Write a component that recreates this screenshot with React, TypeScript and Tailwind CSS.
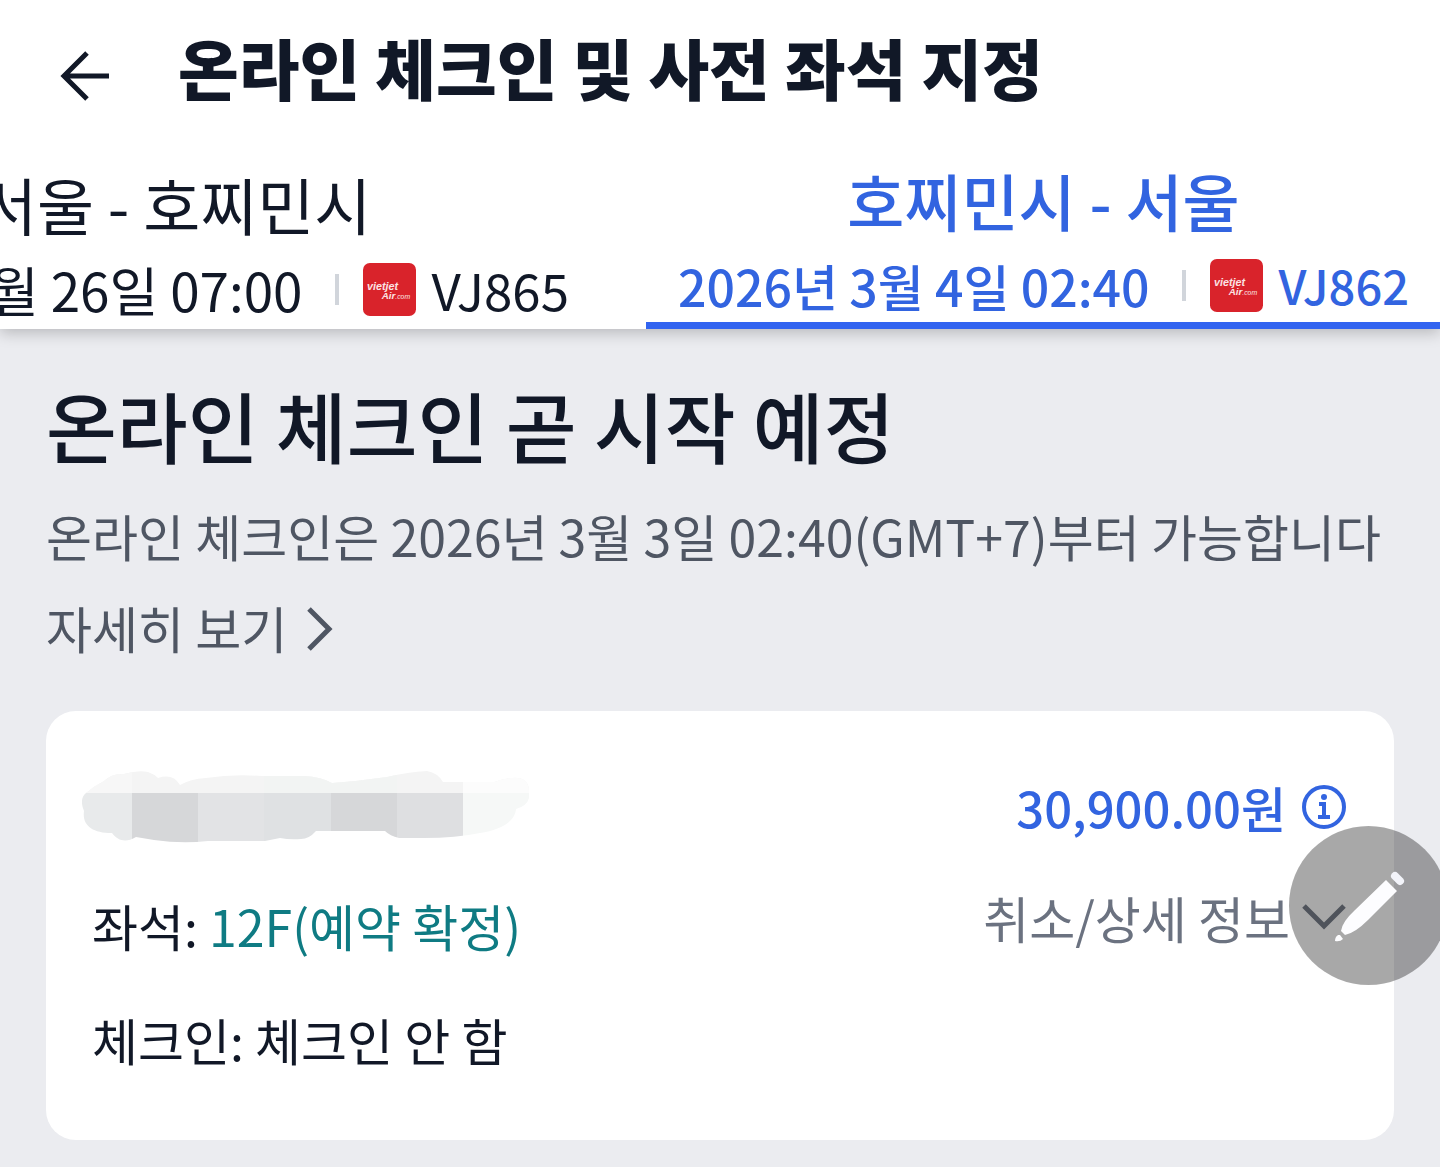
import type { ReactNode } from 'react';

function AirlineLogo() {
  return (
    <svg viewBox="0 0 54 54" className="h-[53px] w-[53px] shrink-0" role="img" aria-label="vietjet Air.com">
      <rect width="54" height="54" rx="7" fill="#d9232b" />
      <g fill="#fbe3e4" fontFamily="Liberation Sans, sans-serif" fontStyle="italic" fontWeight="700">
        <text x="4" y="28" fontSize="11">
          vietjet
        </text>
        <text x="19" y="37" fontSize="10">
          Air
          <tspan fontSize="7" fontWeight="400">
            .com
          </tspan>
        </text>
      </g>
    </svg>
  );
}

type FlightTabProps = {
  route: string;
  time: string;
  flight: string;
  active?: boolean;
};

function FlightTab({ route, time, flight, active = false }: FlightTabProps) {
  return (
    <button
      type="button"
      role="tab"
      aria-selected={active}
      className={
        active
          ? 'flex shrink-0 flex-col items-center border-b-[7px] border-[#3264f0] pt-1 pr-[31px] pl-8 font-medium text-[#3264e0]'
          : 'mr-[45px] flex shrink-0 flex-col items-center px-8 text-[#111827]'
      }
    >
      <span className={active ? 'text-[62px] leading-[96px]' : 'text-[62px] leading-[90px]'}>{route}</span>
      <span className={active ? 'flex items-center text-[50px] leading-[74px]' : 'flex items-center text-[53px] leading-[80px]'}>
        {time}
        <span className="mr-6 ml-8 h-[31px] w-1 bg-[#d1d5db]" />
        <AirlineLogo />
        <span className={active ? 'ml-4 text-[47px]' : 'ml-4 text-[51px]'}>{flight}</span>
      </span>
    </button>
  );
}

function RedactedName() {
  return (
    <svg viewBox="0 0 448 72" className="-ml-[10px] h-[72px] w-[448px]" role="img" aria-label="승객 이름">
      <defs>
        <clipPath id="brush">
          <path d="M4 22Q12 15 22 10Q30 2 42 3Q56 -1 66 1Q72 3 76 7Q91 2 98 14Q108 8 124 7Q150 3 180 5H222Q240 6 250 12Q277 10 305 6Q326 1 345 0Q356 2 361 11H412C430 5 447 3 447 20V27Q445 35 434 38C433 51 418 59 398 62Q374 67 342 67H317Q308 65 303 60H234Q227 68 219 68Q208 69 198 67L183 70H126Q100 73 72 69L54 66C44 72 36 70 30 62C10 62 0 54 2 40Q-3 28 4 22Z" />
        </clipPath>
      </defs>
      <g clipPath="url(#brush)">
        <rect width="448" height="22" fill="#f4f4f4" />
        <rect width="50" height="22" fill="#f7f7f7" />
        <rect x="182" width="133" height="22" fill="#f2f4f3" />
        <rect x="381" width="67" height="22" fill="#fcfcfc" />
        <rect y="22" width="50" height="50" fill="#e8eaeb" />
        <rect x="50" y="22" width="66" height="50" fill="#d6d7d9" />
        <rect x="116" y="22" width="66" height="50" fill="#e2e3e5" />
        <rect x="182" y="22" width="67" height="50" fill="#dfe1e3" />
        <rect x="249" y="22" width="66" height="50" fill="#d6d7d9" />
        <rect x="315" y="22" width="66" height="50" fill="#dedfe1" />
        <rect x="381" y="22" width="67" height="50" fill="#f6f8f7" />
      </g>
    </svg>
  );
}

function Row({ children }: { children: ReactNode }) {
  return <div className="flex items-start justify-between">{children}</div>;
}

export default function App() {
  return (
    <div className="relative min-h-screen overflow-hidden bg-[#ebecf0] pb-7 font-['Noto_Sans_CJK_KR',sans-serif] whitespace-nowrap text-[#111827]">
      <div className="bg-white shadow-[0_4px_14px_rgba(0,0,0,0.22)]">
        <header className="flex h-[148px] items-center pl-[60px]">
          <button type="button" aria-label="뒤로" className="mt-1">
            <svg viewBox="0 0 50 50" className="h-[50px] w-[50px]" fill="none" stroke="#111827" strokeWidth="5">
              <path d="M49 25H4M27 2L4 25L27 48" />
            </svg>
          </button>
          <h1 className="mb-4 ml-[68px] text-[66px] leading-[96px] font-black">온라인 체크인 및 사전 좌석 지정</h1>
        </header>
        <div role="tablist" className="flex items-end justify-end overflow-hidden">
          <FlightTab route="서울 - 호찌민시" time="2026년 2월 26일 07:00" flight="VJ865" />
          <FlightTab route="호찌민시 - 서울" time="2026년 3월 4일 02:40" flight="VJ862" active />
        </div>
      </div>

      <main className="px-[46px] pt-10">
        <h2 className="text-[77px] leading-[112px] font-medium">온라인 체크인 곧 시작 예정</h2>
        <p className="mt-2 text-[50px] leading-[92px] text-[#4f5663]">
          온라인 체크인은 2026년 3월 3일 02:40(GMT+7)부터 가능합니다
        </p>
        <a href="#details" className="flex w-fit items-center gap-5 text-[50px] leading-[92px] text-[#4f5663]">
          자세히 보기
          <svg viewBox="0 0 26 44" className="mt-1 h-11 w-[26px]" fill="none" stroke="currentColor" strokeWidth="5">
            <path d="M2 2L22 22L2 42" />
          </svg>
        </a>

        <section className="mt-[38px] rounded-[30px] bg-white pt-[50px] pr-12 pb-[55px] pl-[46px] text-[50px] leading-[92px]">
          <div className="flex items-center justify-between">
            <RedactedName />
            <button type="button" className="flex items-center gap-4 text-[49px] font-medium text-[#3264e0]">
              30,900.00원
              <svg viewBox="0 0 44 44" className="h-11 w-11" fill="none" stroke="currentColor" strokeWidth="4">
                <circle cx="22" cy="22" r="20" />
                <circle cx="22" cy="12" r="3" fill="currentColor" stroke="none" />
                <path d="M17 19H22V32M16 32H28" />
              </svg>
            </button>
          </div>
          <div className="mt-[18px]">
            <Row>
              <p className="pt-2">
                좌석: <span className="text-[#0f7b83]">12F(예약 확정)</span>
              </p>
              <button type="button" className="flex items-center gap-3 text-[#6b7280]">
                취소/상세 정보
                <svg viewBox="0 0 44 26" className="h-[26px] w-11" fill="none" stroke="#787f8b" strokeWidth="5">
                  <path d="M2 2L22 22L42 2" />
                </svg>
              </button>
            </Row>
          </div>
          <p className="mt-[22px]">체크인: 체크인 안 함</p>
        </section>
      </main>

      <button
        type="button"
        aria-label="편집"
        className="absolute top-[826px] -right-2 h-[159px] w-[159px] rounded-full bg-black/34"
      >
        <svg viewBox="0 0 159 159" className="h-full w-full" fill="#fdfdff">
          <path d="M97 54L108 65L79 94Q66 107 56 109L52 105Q53 96 66 84Z" />
          <path d="M51 109L54 113Q51 116 46 115Q46 111 49 109Z" />
          <path d="M106 50L111 55" stroke="#f3f4fa" strokeWidth="8" strokeLinecap="round" />
        </svg>
      </button>
    </div>
  );
}
